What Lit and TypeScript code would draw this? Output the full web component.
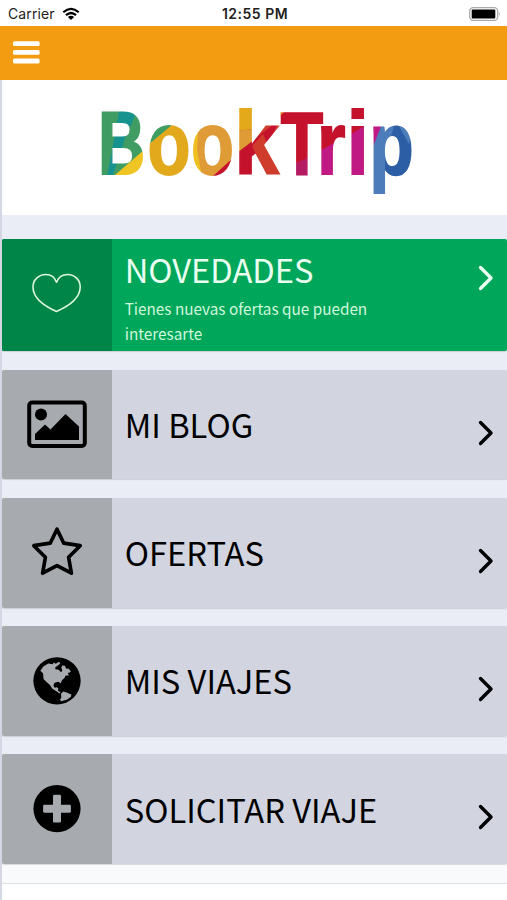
import { LitElement, html, svg, css } from "lit";
import { customElement, property } from "lit/decorators.js";

const icons: Record<string, unknown> = {
  heart: svg`<path d="M56.5 57.2C54.6 52 50.5 49.5 46 49.5C38.5 49.5 33 55 33 62C33 73 43 80.5 56.5 86.5C70 80.5 80.2 73 80.2 62C80.2 55 74.8 49.5 67.5 49.5C62.5 49.5 58.5 52 56.5 57.2Z" transform="translate(-2 -14)" fill="none" stroke="#dcf8e3" stroke-width="1.6" stroke-linejoin="round"/>`,
  image: svg`<g transform="translate(0 -.6)"><rect x="27.2" y="33.2" width="55.6" height="43.4" rx="3" fill="none" stroke="#000" stroke-width="4"/>
    <circle cx="39" cy="45" r="6" fill="#000"/>
    <path d="M33 70.5V64.5L43 55L48.5 60L63.5 44.5L77 57V70.5Z" fill="#000"/></g>`,
  star: svg`<path d="M55 31.2L61.8 45.2L78.2 47.7L66.6 59.2L69.4 75.2L55 67.7L40.6 75.2L43.4 59.2L31.8 47.7L48.2 45.2Z" fill="none" stroke="#000" stroke-width="3.7" stroke-linejoin="round"/>`,
  globe: svg`<g transform="translate(-2 -6.2) scale(.33333)">
    <circle cx="171" cy="183" r="71" fill="#000"/>
    <path d="M121 153L130 140L145 131L158 133L161 128L167 132L177 126L181 130L175 136L166 142L166 148L176 150L183 157L187 152L184 144L187 137L195 138L198 146L206 147L213 156L203 160L207 166L196 168L194 174L186 181L182 190L175 186L164 189L160 197L164 204L171 202L175 207L174 213L182 218L179 221L169 214L157 207L151 197L139 186L131 178L129 160Z" fill="#a7abaf"/>
    <path d="M183 222L190 215L200 218L214 224L213 231L202 239L184 244L180 240L184 233Z" fill="#a7abaf"/></g>`,
  plus: svg`<circle cx="55" cy="54.6" r="23.6" fill="#000"/>
    <g fill="#a7abaf"><rect x="51" y="40.8" width="8" height="27.8" rx="1.4"/><rect x="41.1" y="50.7" width="27.8" height="8" rx="1.4"/></g>`,
};

@customElement("menu-card")
class MenuCard extends LitElement {
  @property() label = "";
  @property() icon = "";
  @property() detail = "";
  @property({ type: Boolean, reflect: true }) featured = false;

  static styles = css`
    :host { display: flex; height: 109.7px; background: #d2d5e0; color: #000; border-radius: 2px; box-shadow: 0 1px 1px rgba(0,0,0,.13); overflow: hidden; }
    :host([featured]) { height: 112px; background: #00a65a; color: #e9fff0; }
    .icon { width: 110px; flex: none; background: #a7abaf; }
    :host([featured]) .icon { background: #008548; }
    svg { display: block; }
    .body { flex: 1; padding-left: 12.7px; display: flex; flex-direction: column; justify-content: center; }
    .label { font-size: 32.7px; line-height: 40px; white-space: nowrap; margin-top: -1px; }
    :host([featured]) .body { justify-content: flex-start; padding-top: 11px; }
    .detail { font-size: 15.3px; line-height: 24.5px; width: 270px; margin-top: 7px; color: #cff8dc; }
    .arrow { flex: none; width: 29px; padding-top: 49px; }
    :host([featured]) .arrow { padding-top: 25px; }
  `;

  render() {
    return html`
      <div class="icon"><svg width="110" height="110" viewBox="0 0 110 110">${icons[this.icon]}</svg></div>
      <div class="body">
        <div class="label">${this.label}</div>
        ${this.detail ? html`<div class="detail">${this.detail}</div>` : ""}
      </div>
      <div class="arrow"><svg width="18" height="28" viewBox="0 0 18 28"><path d="M2.5 3.5L13 14L2.5 24.5" fill="none" stroke="currentColor" stroke-width="3.4" stroke-linecap="round" stroke-linejoin="round"/></svg></div>
    `;
  }
}

interface Glyph { ch: string; x: number; w: number }

const glyphs: Glyph[] = [
  { ch: "B", x: 98, w: 47.2 },
  { ch: "o", x: 147.6, w: 43 },
  { ch: "o", x: 191, w: 43 },
  { ch: "k", x: 234.5, w: 44.5 },
  { ch: "T", x: 280.5, w: 42.7 },
  { ch: "r", x: 317, w: 28.5 },
  { ch: "i", x: 346.8, w: 22 },
  { ch: "p", x: 369.2, w: 44.5 },
];

@customElement("brand-logo")
class BrandLogo extends LitElement {
  static styles = css`
    :host, svg { display: block; }
    text { font: 700 89.5px "Liberation Sans", sans-serif; }
  `;

  render() {
    return html`<svg width="505" height="133" viewBox="2 81 505 133">
      <defs><pattern id="facets" patternUnits="userSpaceOnUse" x="0" y="0" width="507" height="300">
        <path d="M95 100H146V200H95Z" fill="#3f9d63"/>
        <path d="M146 100H190V200H146Z" fill="#e2a91d"/>
        <path d="M190 100H236V200H190Z" fill="#df9b35"/>
        <path d="M236 100H280.5V200H236Z" fill="#cf3c2c"/>
        <path d="M280.5 100H350V200H280.5Z" fill="#c4122d"/>
        <path d="M350 100H368V200H350Z" fill="#c01983"/>
        <path d="M368 100H420V200H368Z" fill="#4c7dba"/>
        <path d="M120 108H138L128 134L112 178H107L113 146Z" fill="#16928f"/>
        <path d="M128 128L146 120V150L122 150Z" fill="#3f9d63"/>
        <path d="M115 176L145 150V178H115Z" fill="#efc524"/>
        <path d="M148 146V120H180L173 125Z" fill="#3f9d63"/>
        <path d="M190 120H199L197 150L202 178H190Z" fill="#eec022"/>
        <path d="M212 178L234 158V178Z" fill="#c4122d"/>
        <path d="M236 105H254V130L236 132Z" fill="#e4a91a"/>
        <path d="M236 132L254 130V142L236 154Z" fill="#df9b35"/>
        <path d="M236 155L280 120L252 178H236Z" fill="#c4122d"/>
        <path d="M252 147L263 135L282 178H267Z" fill="#cf3c2c"/>
        <path d="M280 108H289L280 117Z" fill="#dc8423"/>
        <path d="M294 165L310 158V178H294Z" fill="#b51b62"/>
        <path d="M318 153L334 144V178H318Z" fill="#c01983"/>
        <path d="M350 106H368V125L350 136Z" fill="#c4122d"/>
        <path d="M370 120H384L372 150Z" fill="#c01983"/>
        <path d="M385 178V158L396 120H414V178Z" fill="#2c5ea5"/>
        <path d="M395 120L409 145L413 125Z" fill="#4c7dba"/>
      </pattern></defs>
      <text y="174.8" fill="url(#facets)" stroke="url(#facets)" stroke-width="1.8">${glyphs.map((g) => svg`<tspan x=${g.x} textLength=${g.w} lengthAdjust="spacingAndGlyphs">${g.ch}</tspan>`)}</text>
    </svg>`;
  }
}

@customElement("app-root")
class AppRoot extends LitElement {
  static styles = css`
    :host { display: flex; flex-direction: column; width: 507px; height: 900px; overflow: hidden; background: #fff; font-family: "Noto Sans CJK SC", "Noto Sans", sans-serif; }
    .status { height: 25.5px; flex: none; display: grid; grid-template-columns: 1fr auto 1fr; align-items: center; font: 14px/25px Inter, sans-serif; color: #222; padding: 1px 5px 0 8px; box-sizing: border-box; }
    .carrier { display: flex; align-items: center; gap: 7px; letter-spacing: .1px; }
    .time { font-weight: 600; font-size: 14px; letter-spacing: .5px; }
    .battery { justify-self: end; }
    svg { display: block; }
    .bar { height: 54.5px; flex: none; background: #f39c12; padding: 15.5px 12px; box-sizing: border-box; }
    .page { flex: 1; border-left: 2px solid #d5d8e4; background: #eaedf6; }
    .brand { height: 134.5px; background: #fff; }
    .cards { display: flex; flex-direction: column; gap: 18.55px; padding: 24.6px 0 0; }
    .footer { background: #f9fafc; height: 18.7px; border-bottom: 1.5px solid #dcdee2; }
    .blank { height: 30px; background: #fff; }
  `;

  render() {
    return html`
      <div class="status">
        <div class="carrier"><span>Carrier</span>
          <svg width="18" height="14" viewBox="0 0 18 14"><g fill="none" stroke="#000" stroke-width="2.2"><path d="M1.3 5.2Q9 -1.6 16.7 5.2"/><path d="M4 8.2Q9 3.8 14 8.2"/></g><path d="M9 13L5.9 10Q9 7.6 12.1 10Z" fill="#000"/></svg>
        </div>
        <div class="time">12:55 PM</div>
        <svg class="battery" width="34" height="16" viewBox="0 0 34 16"><rect x="1.7" y="1.7" width="28" height="12.6" rx="3.5" fill="#fff" stroke="#aaa" stroke-width="1.3"/><rect x="3.7" y="3.6" width="23.6" height="8.8" rx="1" fill="#000"/><path d="M31.2 6.2Q33 8 31.2 9.8Z" fill="#999"/></svg>
      </div>
      <div class="bar"><svg width="30" height="24" viewBox="0 0 30 24"><g fill="#fff"><rect x="1" y=".2" width="26.6" height="4.8" rx="1.5"/><rect x="1" y="8.9" width="26.6" height="4.8" rx="1.5"/><rect x="1" y="17.6" width="26.6" height="4.8" rx="1.5"/></g></svg></div>
      <div class="page">
        <div class="brand"><brand-logo></brand-logo></div>
        <div class="cards">
          <menu-card featured icon="heart" label="NOVEDADES" detail="Tienes nuevas ofertas que pueden interesarte"></menu-card>
          <menu-card icon="image" label="MI BLOG"></menu-card>
          <menu-card icon="star" label="OFERTAS"></menu-card>
          <menu-card icon="globe" label="MIS VIAJES"></menu-card>
          <menu-card icon="plus" label="SOLICITAR VIAJE"></menu-card>
        </div>
        <div class="footer"></div>
        <div class="blank"></div>
      </div>
    `;
  }
}
